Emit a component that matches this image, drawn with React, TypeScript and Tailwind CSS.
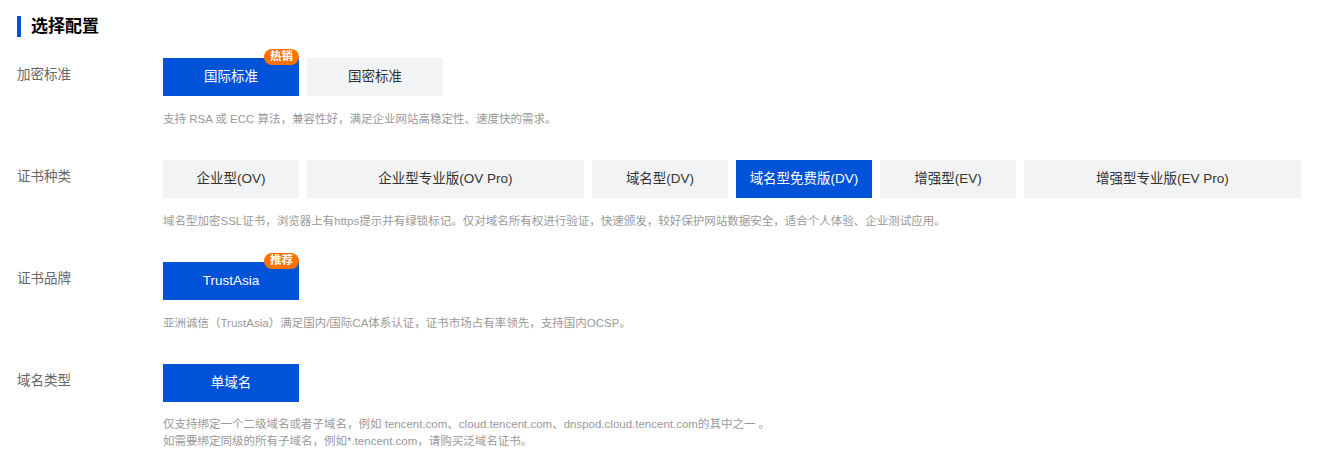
import React from "react";

type Opt = { label: string; wide?: boolean; active?: boolean; badge?: string };

const rows: { title: string; options: Opt[]; desc: string[] }[] = [
  {
    title: "加密标准",
    options: [
      { label: "国际标准", active: true, badge: "热销" },
      { label: "国密标准" },
    ],
    desc: ["支持 RSA 或 ECC 算法，兼容性好，满足企业网站高稳定性、速度快的需求。"],
  },
  {
    title: "证书种类",
    options: [
      { label: "企业型(OV)" },
      { label: "企业型专业版(OV Pro)", wide: true },
      { label: "域名型(DV)" },
      { label: "域名型免费版(DV)", active: true },
      { label: "增强型(EV)" },
      { label: "增强型专业版(EV Pro)", wide: true },
    ],
    desc: [
      "域名型加密SSL证书，浏览器上有https提示并有绿锁标记。仅对域名所有权进行验证，快速颁发，较好保护网站数据安全，适合个人体验、企业测试应用。",
    ],
  },
  {
    title: "证书品牌",
    options: [{ label: "TrustAsia", active: true, badge: "推荐" }],
    desc: ["亚洲诚信（TrustAsia）满足国内/国际CA体系认证，证书市场占有率领先，支持国内OCSP。"],
  },
  {
    title: "域名类型",
    options: [{ label: "单域名", active: true }],
    desc: [
      "仅支持绑定一个二级域名或者子域名，例如 tencent.com、cloud.tencent.com、dnspod.cloud.tencent.com的其中之一 。",
      "如需要绑定同级的所有子域名，例如*.tencent.com，请购买泛域名证书。",
    ],
  },
];

function OptionButton({ opt }: { opt: Opt }) {
  return (
    <button
      type="button"
      className={`relative flex h-[38px] items-center justify-center text-[13.5px] ${
        opt.wide ? "w-[277px]" : "w-[136px]"
      } ${opt.active ? "bg-[#0052d9] text-white" : "bg-[#f2f3f5] text-[#333]"}`}
    >
      {opt.label}
      {opt.badge && (
        <span className="absolute right-0 top-[-9px] flex h-[16px] items-center rounded-[8px] bg-[#ff7200] px-[6px] text-[11.5px] leading-none font-bold text-white">
          {opt.badge}
        </span>
      )}
    </button>
  );
}

export default function App() {
  return (
    <div
      className="h-[465px] w-[1329px] bg-white pl-[17px] pt-[15px]"
      style={{ fontFamily: '"Liberation Sans", "Noto Sans CJK SC", sans-serif' }}
    >
      {/* Title */}
      <div className="flex h-[22px] items-center">
        <span className="h-[21px] w-[4px] bg-[#0052d9]" />
        <h2 className="ml-[10px] pt-[2px] text-[17px] font-bold leading-[22px] text-[#000]">选择配置</h2>
      </div>

      <div className="mt-[21px] flex flex-col gap-[32px]">
        {rows.map((row) => (
          <div key={row.title} className="flex">
            <div className="w-[146px] pt-[7px] text-[13.5px] leading-[20px] text-[#666]">
              {row.title}
            </div>
            <div className="flex flex-col">
              <div className="flex gap-[8px]">
                {row.options.map((opt) => (
                  <OptionButton key={opt.label} opt={opt} />
                ))}
              </div>
              <div
                className={`mt-[14px] text-[11.5px] text-[#999] ${
                  row.desc.length > 1 ? "leading-[17px]" : "leading-[18px]"
                }`}
              >
                {row.desc.map((d) => (
                  <p key={d}>{d}</p>
                ))}
              </div>
            </div>
          </div>
        ))}
      </div>
    </div>
  );
}
